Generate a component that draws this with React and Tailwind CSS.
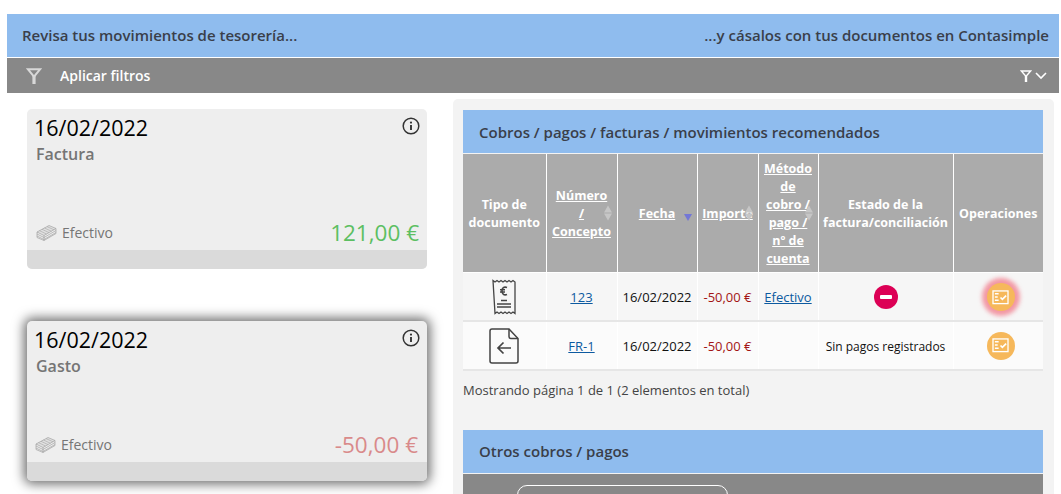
import React from "react";

const FONT = { fontFamily: '"Open Sans", "Liberation Sans", sans-serif' };

function Filter({ className }) {
  return (
    <svg viewBox="0 0 16 16" className={className} fill="none" stroke="currentColor" strokeWidth="2">
      <path d="M1.8 1.2h12.4L8 8.6 1.8 1.2z" />
      <path d="M8 8v8" strokeWidth="3.2" />
    </svg>
  );
}

function Info() {
  return (
    <svg viewBox="0 0 18 18" className="w-[18px] h-[18px] text-[#333]" fill="none">
      <circle cx="9" cy="9" r="7.8" stroke="currentColor" strokeWidth="1.5" />
      <circle cx="9" cy="5.6" r="1.1" fill="currentColor" />
      <path d="M9 8v5" stroke="currentColor" strokeWidth="1.9" />
    </svg>
  );
}

function Cash() {
  return (
    <svg viewBox="0 0 21 17" className="w-[21px] h-[17px] text-[#a2a2a2]" fill="none" stroke="currentColor" strokeWidth="0.7">
      <path d="M1 8 13 1.5 20 4.5 8 11.5z" fill="#e0e0e0" />
      <path d="M3.5 6.7l7 3.3M6 5.3l7 3.3M8.5 4l7 3.3M11 2.6l7 3.2" strokeWidth="0.6" />
      <path d="M1 8v2l7 3.5L20 6.5v-2" />
      <path d="M1 10v2l7 3.5L20 8.5v-2" />
      <path d="M1 12v1.5L8 16.5 20 9.5V8.5" />
      <path d="M8 11.5v5" strokeWidth="0.8" />
    </svg>
  );
}

function Card({ title, amount, color, selected }) {
  return (
    <div
      className={`w-[400px] h-[160px] rounded-[5px] bg-[#eeeeee] flex flex-col overflow-hidden ${
        selected ? "shadow-[0_0_12px_3px_rgba(0,0,0,0.58)]" : ""
      }`}
    >
      <div className={`flex-1 flex flex-col ${selected ? "pl-[7px] pr-[8px]" : "pl-2 pr-[7px]"}`}>
        <div className="flex justify-between items-start pt-[5px]">
          <div className={`text-[21.5px] leading-[28px] text-black ${selected ? "" : "-ml-px"}`}>16/02/2022</div>
          <div className={`pt-[3px] ${selected ? "-mr-px" : ""}`}><Info /></div>
        </div>
        <div className={`text-[16px] leading-[22px] font-semibold text-[#757575] pt-[1px] ${selected ? "pl-[2px]" : "pl-px"}`}>{title}</div>
        <div className="flex-1" />
        <div className="flex justify-between items-end pb-[1px]">
          <div className="flex items-center gap-[5px] pl-px pb-[7px]">
            <Cash />
            <span className="text-[14px] leading-[19px] text-[#757575]">Efectivo</span>
          </div>
          <div className="pr-px">
            <div className={`text-[22.5px] leading-[33px] ${color}`}>{amount}</div>
          </div>
        </div>
      </div>
      <div className="h-[19px] bg-[#dadada]" />
    </div>
  );
}

function Sort({ active }) {
  if (active) {
    return <span className="absolute right-[5px] top-1/2 mt-[1px] w-0 h-0 border-x-[4px] border-x-transparent border-t-[7px] border-t-[#7377d6]" />;
  }
  return (
    <span className="absolute right-[5px] top-1/2 -translate-y-1/2 flex flex-col gap-[1px]">
      <span className="w-0 h-0 border-x-[4.5px] border-x-transparent border-b-[7px] border-b-[#c6c6c6]" />
      <span className="w-0 h-0 border-x-[4.5px] border-x-transparent border-t-[7px] border-t-[#c6c6c6]" />
    </span>
  );
}

function Th({ children, sort, active }) {
  return (
    <th className="relative bg-[#ababab] border-x border-white first:border-l-0 last:border-r-0 px-0 pb-0 pt-[2px] text-center text-[12.5px] leading-[18px] font-bold text-white align-middle">
      {children}
      {sort && <Sort active={active} />}
    </th>
  );
}

function Receipt() {
  return (
    <svg viewBox="0 0 24 36" className="w-[24px] h-[36px] mx-auto text-[#444]" fill="none" stroke="currentColor">
      <path strokeWidth="1.3" d="M1 1.5l2 1.5 2-1.5 2 1.5 2-1.5 2 1.5 2-1.5 2 1.5 2-1.5 2 1.5 2-1.5 2 1.5V34.5l-2-1.5-2 1.5-2-1.5-2 1.5-2-1.5-2 1.5-2-1.5-2 1.5-2-1.5-2 1.5z" />
      <path strokeWidth="1.6" d="M15 8.5c-3-1.2-5 .5-5 3.5s2 4.7 5 3.5M8 10.7h5M8 13h5" />
      <path strokeWidth="1.4" d="M9 21.5h6M5 25h14M5 28h14" />
    </svg>
  );
}

function DocBack() {
  return (
    <svg viewBox="0 0 30 36" className="w-[30px] h-[36px] mx-auto text-[#444]" fill="none" stroke="currentColor" strokeWidth="1.5">
      <path d="M3 1h17l9 9.5V33a2 2 0 0 1-2 2H3a2 2 0 0 1-2-2V3a2 2 0 0 1 2-2z" />
      <path d="M20 1v7.5a2 2 0 0 0 2 2h7" />
      <path d="M22 20H9M14.5 14.5 9 20l5.5 5.5" strokeWidth="1.7" />
    </svg>
  );
}

function OpButton({ glow }) {
  return (
    <span className={`inline-flex items-center justify-center w-7 h-7 rounded-full align-middle bg-[#f6b85b] ${glow ? "shadow-[0_0_4px_5px_rgba(240,90,110,0.6)]" : ""}`}>
      <svg viewBox="0 0 18 16" className="w-[17px] h-[15px] text-white" fill="none" stroke="currentColor">
        <rect x="1" y="1" width="16" height="13.5" strokeWidth="1.4" />
        <path d="M3 4h4M3 7.5h3M3 11h4" strokeWidth="1.5" />
        <path d="M9 8l2 2 4-4" strokeWidth="1.8" />
      </svg>
    </span>
  );
}

function Td({ children, className = "" }) {
  return (
    <td className={`border-x border-white first:border-l-0 last:border-r-0 px-0 pb-0 text-center align-middle ${className}`}>
      {children}
    </td>
  );
}

const A = ({ children }) => <a className="underline text-[#0d5aa0]">{children}</a>;
const U = ({ children }) => <span className="underline">{children}</span>;

function Row({ icon, num, method, state, glow, bg, first }) {
  const text = "pt-[2px] text-[13px]";
  return (
    <tr className={`h-[49px] border-b-2 border-[#e6e6e6] ${first ? "border-t border-t-white" : ""} ${bg}`}>
      <Td className="pt-[1px]">{icon}</Td>
      <Td className={text}><A>{num}</A></Td>
      <Td className={`${text} text-[#111]`}>16/02/2022</Td>
      <Td className={`${text} text-[#a31515]`}>-50,00 €</Td>
      <Td className={text}>{method && <A>{method}</A>}</Td>
      <Td className="pt-[2px] text-[12px] text-[#111]">{state}</Td>
      <Td className={`pl-[5px] ${first ? "pt-[2px]" : "pt-0"}`}><OpButton glow={glow} /></Td>
    </tr>
  );
}

export default function App() {
  return (
    <div style={FONT} className="w-[1061px] h-[494px] overflow-hidden bg-white pt-[14px] pl-[7px]">
      <div className="w-[1052px] h-[43px] bg-[#8fbcee] flex items-center justify-between pl-[15px] pr-[10px] text-[15px] font-semibold text-[#3a3f4a]">
        <span>Revisa tus movimientos de tesorería...</span>
        <span>...y cásalos con tus documentos en Contasimple</span>
      </div>
      <div className="w-[1052px] mt-px h-[35px] bg-[#888888] flex items-center justify-between text-white pl-[19px] pr-[12px]">
        <div className="flex items-center gap-[18px]">
          <Filter className="w-4 h-4 text-[#d8d8d8]" />
          <span className="text-[14px] font-semibold">Aplicar filtros</span>
        </div>
        <div className="flex items-center gap-[3px]">
          <Filter className="w-[12px] h-[12px]" />
          <svg viewBox="0 0 12 8" className="w-[12px] h-[8px]" fill="none" stroke="currentColor" strokeWidth="1.6"><path d="M1 1l5 5 5-5" /></svg>
        </div>
      </div>
      <div className="flex mt-[6px]">
        <div className="w-[446px] shrink-0 pl-[20px] pt-[10px] flex flex-col gap-[52px]">
          <Card title="Factura" amount="121,00 €" color="text-[#5cbf62]" />
          <Card title="Gasto" amount="-50,00 €" color="text-[#d98a8a]" selected />
        </div>
        <div className="w-[601px] h-[420px] rounded-t-[5px] bg-[#f3f3f3] pt-[11px] pl-[10px] pr-[11px]">
          <div className="h-[43px] bg-[#8fbcee] flex items-center pl-[16px] pt-[2px] text-[15px] font-semibold text-[#3a3f4a]">
            Cobros / pagos / facturas / movimientos recomendados
          </div>
          <table className="mt-px w-[580px] table-fixed border-collapse">
            <colgroup>
              <col className="w-[83px]" />
              <col className="w-[71px]" />
              <col className="w-[80px]" />
              <col className="w-[61px]" />
              <col className="w-[60px]" />
              <col className="w-[135px]" />
              <col className="w-[90px]" />
            </colgroup>
            <thead>
              <tr className="h-[118px]">
                <Th>Tipo de documento</Th>
                <Th sort><U>Número</U><br /><U>/</U><br /><U>Concepto</U></Th>
                <Th sort active><U>Fecha</U></Th>
                <Th sort><U>Importe</U></Th>
                <Th sort><U>Método</U><br /><U>de</U><br /><U>cobro /</U><br /><U>pago /</U><br /><U>nº de</U><br /><U>cuenta</U></Th>
                <Th>Estado de la factura/conciliación</Th>
                <Th>Operaciones</Th>
              </tr>
            </thead>
            <tbody>
              <Row
                first
                bg="bg-[#f6f6f6]"
                icon={<Receipt />}
                num="123"
                method="Efectivo"
                glow
                state={
                  <span className="inline-flex items-center justify-center w-6 h-6 rounded-full bg-[#dc0055] align-middle">
                    <span className="w-[12px] h-[4px] bg-white rounded-[1px]" />
                  </span>
                }
              />
              <Row bg="bg-[#fbfbfb]" icon={<DocBack />} num="FR-1" state="Sin pagos registrados" />
            </tbody>
          </table>
          <div className="mt-[10px] text-[13px] leading-[18px] text-[#444]">
            Mostrando página 1 de 1 (2 elementos en total)
          </div>
          <div className="mt-[31px] h-[43px] bg-[#8fbcee] flex items-center pl-[16px] text-[15px] font-semibold text-[#3a3f4a]">
            Otros cobros / pagos
          </div>
          <div className="mt-px h-[40px] bg-[#888888] pl-[54px] pt-[11px]">
            <div className="w-[211px] h-[30px] rounded-[10px] border border-white bg-[#888888]" />
          </div>
        </div>
      </div>
    </div>
  );
}
